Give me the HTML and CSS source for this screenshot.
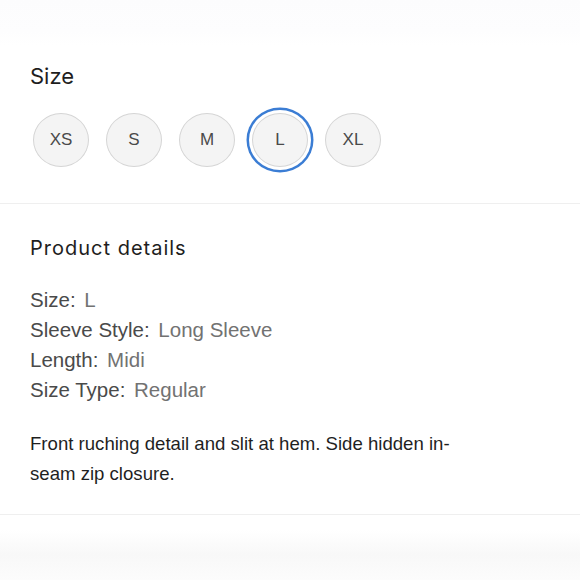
FILE: index.html
```html
<!DOCTYPE html>
<html lang="en">
<head>
    <meta charset="UTF-8">
    <meta name="viewport" content="width=device-width, initial-scale=1.0">
    <title>Product - Size & details</title>
    <link rel="stylesheet" href="styles.css">
</head>
<body>
    <div class="top-fade"></div>

    <section class="section size-section">
        <h2 class="title">Size</h2>
        <div class="swatches">
            <button class="swatch">XS</button>
            <button class="swatch">S</button>
            <button class="swatch">M</button>
            <button class="swatch selected">L</button>
            <button class="swatch">XL</button>
        </div>
    </section>

    <section class="section details-section">
        <h2 class="details-title">Product details</h2>
        <ul class="attributes">
            <li><span class="label">Size:</span> <span class="value">L</span></li>
            <li><span class="label">Sleeve Style:</span> <span class="value">Long Sleeve</span></li>
            <li><span class="label">Length:</span> <span class="value">Midi</span></li>
            <li><span class="label">Size Type:</span> <span class="value">Regular</span></li>
        </ul>
        <p class="description">Front ruching detail and slit at hem. Side hidden in-seam zip closure.</p>
    </section>

    <div class="bottom-fade"></div>
</body>
</html>
```

FILE: styles.css
```css
body {
    margin: 0;
    width: 580px;
    height: 580px;
    overflow: hidden;
    background-color: #fff;
    font-family: 'Liberation Sans', Arial, Helvetica, sans-serif;
    color: #222;
}
.top-fade {
    height: 45px;
    background: linear-gradient(#fcfcfd, #fdfdfe 70%, #fff);
}
.section {
    padding: 0 30px;
    border-bottom: 1px solid #efefef;
}
.size-section {
    padding-top: 17px;
    padding-bottom: 36px;
}
.title {
    margin: 0;
    font-family: Inter, 'Liberation Sans', sans-serif;
    font-weight: 400;
    font-size: 22px;
    line-height: 28px;
    color: #1e1e1e;
}
.swatches {
    display: flex;
    gap: 17px;
    margin: 23px 0 0 3px;
}
.swatch {
    box-sizing: border-box;
    width: 56px;
    height: 54px;
    padding: 0;
    border: 1.5px solid #d5d5d5;
    border-radius: 50%;
    background-color: #f4f4f4;
    font-family: 'Liberation Sans', Arial, sans-serif;
    font-size: 17px;
    color: #4a4a4a;
    cursor: pointer;
}
.swatch.selected {
    box-shadow: 0 0 0 3px #fff, 0 0 0 5.5px #3b7dd4;
}
.details-section {
    padding-top: 31px;
    padding-bottom: 25px;
}
.details-title {
    margin: 0;
    font-family: Inter, 'Liberation Sans', sans-serif;
    font-weight: 400;
    font-size: 20px;
    line-height: 26px;
    letter-spacing: 1px;
    color: #1e1e1e;
}
.attributes {
    list-style: none;
    margin: 24px 0 0;
    padding: 0;
    font-size: 20.5px;
    line-height: 30px;
}
.label {
    color: #4a4a4a;
}
.value {
    margin-left: 3px;
    color: #727272;
}
.description {
    max-width: 460px;
    margin: 24px 0 0;
    font-size: 18.6px;
    line-height: 30px;
    color: #1f1f1f;
}
.bottom-fade {
    height: 65px;
    background: linear-gradient(#fff 0, #fff 15px, #f8f8f8 40px, #fcfcfc);
}
```
